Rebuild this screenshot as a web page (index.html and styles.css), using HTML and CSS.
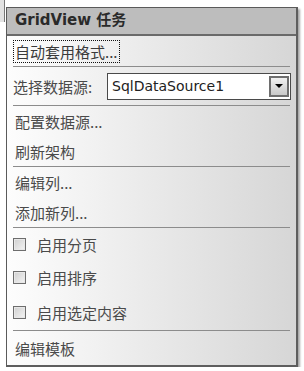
FILE: index.html
```
<!DOCTYPE html>
<html>
    <head>
        <link rel="stylesheet" href="styles.css">
    </head>
    <body>
        <div class="edge"></div>
        <div class="panel">
            <div class="title">GridView 任务</div>
            <div class="row">
                <span class="link focused">自动套用格式...</span>
            </div>
            <div class="sep"></div>
            <div class="row source">
                <span class="label">选择数据源:</span>
                <div class="select">
                    <span class="value">SqlDataSource1</span>
                    <span class="arrow"><i></i></span>
                </div>
            </div>
            <div class="sep"></div>
            <div class="row"><span class="link">配置数据源...</span></div>
            <div class="row"><span class="link">刷新架构</span></div>
            <div class="sep"></div>
            <div class="row"><span class="link">编辑列...</span></div>
            <div class="row"><span class="link">添加新列...</span></div>
            <div class="sep"></div>
            <div class="row check first"><span class="box"></span>启用分页</div>
            <div class="row check"><span class="box"></span>启用排序</div>
            <div class="row check tall"><span class="box"></span>启用选定内容</div>
            <div class="sep"></div>
            <div class="row last"><span class="link">编辑模板</span></div>
        </div>
    </body>
</html>
```

FILE: styles.css
```
body {
    margin: 0;
    background: #fff;
    font-family: "Noto Sans CJK SC", "Liberation Sans", sans-serif;
    color: #4a4a4a;
}
.edge {
    position: absolute;
    left: 0;
    top: 0;
    width: 4px;
    height: 22px;
    background: #e2e2e2;
    border-right: 1px solid #777;
}
.panel {
    margin: 7px 0 0 6px;
    width: 289px;
    border: 1px solid #5a5a5a;
    border-right: 2px solid #5e5e5e;
    border-bottom: 2px solid #5e5e5e;
    background: linear-gradient(to right, #fdfdfd, #d6d6d6);
    box-shadow: 2px 2px 2px rgba(0, 0, 0, 0.35);
}
.title {
    height: 26px;
    line-height: 24px;
    padding-left: 8px;
    background: #bdbdbd;
    border-bottom: 2px solid #6a6a6a;
    font-family: "DejaVu Sans", "Noto Sans CJK SC", sans-serif;
    font-weight: bold;
    font-size: 15px;
    color: #2a2a2a;
}
.row {
    height: 30px;
    display: flex;
    align-items: center;
    padding-left: 6px;
    font-size: 15px;
}
.link {
    padding: 0 1px;
    border: 1px solid transparent;
}
.focused {
    border: 1px dotted #111;
    color: #3a3a3a;
}
.sep {
    height: 1px;
    margin: 0 6px;
    background: #8c8c8c;
}
.source {
    height: 38px;
}
.label {
    width: 94px;
}
.select {
    width: 182px;
    height: 25px;
    border: 1px solid #4a4a4a;
    background: #fff;
    display: flex;
    align-items: center;
    justify-content: space-between;
}
.value {
    padding-left: 4px;
    font-family: "DejaVu Sans", sans-serif;
    font-size: 14px;
    color: #222;
}
.arrow {
    width: 16px;
    height: 17px;
    margin-right: 1px;
    border: 2px solid #6e6e6e;
    background: linear-gradient(#f0f0f0, #c8c8c8);
    display: flex;
    align-items: center;
    justify-content: center;
}
.arrow i {
    width: 0;
    height: 0;
    border-left: 4px solid transparent;
    border-right: 4px solid transparent;
    border-top: 4px solid #000;
}
.check {
    height: 34px;
}
.check.first {
    height: 32px;
}
.check.tall {
    height: 36px;
}
.box {
    width: 11px;
    height: 11px;
    margin-right: 11px;
    border: 1px solid #6d6d6d;
    background: linear-gradient(135deg, #cfcfcf, #f4f4f4);
    box-shadow: inset 0 0 0 1px #e8e8e8;
}
.last {
    height: 34px;
}
```
